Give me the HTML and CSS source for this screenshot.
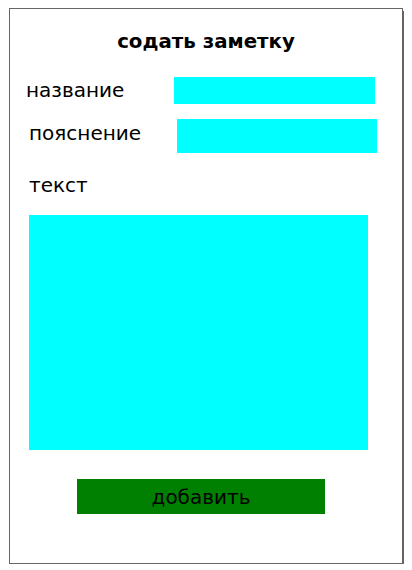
FILE: index.html
```html
<!DOCTYPE html>
<html>
<head>
    <title>содать заметку</title>
    <link rel="stylesheet" href="styles.css">
</head>
<body>
    <div class="card">
        <h1>содать заметку</h1>

        <div class="row row-name">
            <label for="noteName">название</label>
            <input type="text" id="noteName" class="field-name">
        </div>

        <div class="row row-desc">
            <label for="noteDesc">пояснение</label>
            <input type="text" id="noteDesc" class="field-desc">
        </div>

        <label for="noteText" class="text-label">текст</label>
        <textarea id="noteText"></textarea>

        <div class="actions">
            <button>добавить</button>
        </div>
    </div>
</body>
</html>
```

FILE: styles.css
```css
body {
    margin: 8px;
    font-family: "DejaVu Sans", sans-serif;
    color: #000;
}
.card {
    width: 392px;
    height: 554px;
    margin: 0 auto;
    border: 1px solid #666;
    box-shadow: 3px 3px 0 #666;
    box-sizing: content-box;
}
h1 {
    margin: 21px 0 0;
    font-size: 19.8px;
    line-height: 23px;
    text-align: center;
}
.row {
    display: flex;
    align-items: center;
}
label {
    font-size: 20px;
    line-height: 23px;
}
input, textarea, button {
    border: none;
    padding: 0;
    margin: 0;
    border-radius: 0;
    font-family: inherit;
    display: block;
}
input, textarea {
    background-color: cyan;
}
.row-name {
    margin-top: 24px;
    padding-left: 16px;
}
.row-name label {
    width: 148px;
}
.field-name {
    width: 201px;
    height: 27px;
}
.row-desc {
    margin-top: 15px;
    padding-left: 19px;
}
.row-desc label {
    width: 148px;
    padding-bottom: 6px;
}
.field-desc {
    width: 200px;
    height: 34px;
}
.text-label {
    display: block;
    margin: 21px 0 0 19px;
}
textarea {
    width: 339px;
    height: 235px;
    margin: 18px 0 0 19px;
    resize: none;
}
.actions {
    margin-top: 29px;
    padding-left: 67px;
}
button {
    width: 248px;
    height: 35px;
    background-color: green;
    color: #000;
    font-size: 20px;
}
```
